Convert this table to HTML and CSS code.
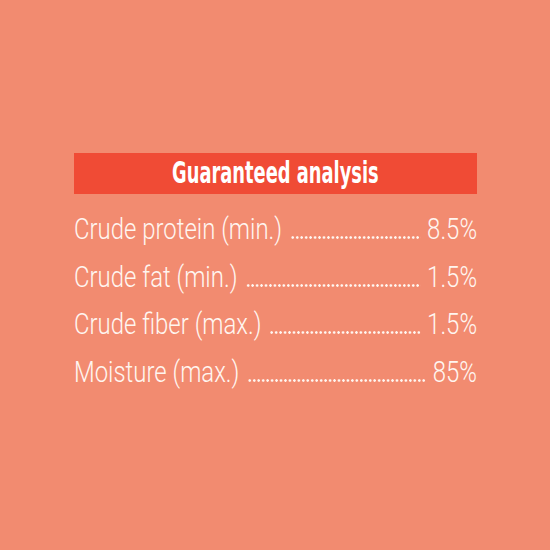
FILE: index.html
```
<!DOCTYPE html>
<html lang="en">
<head>
    <meta charset="UTF-8">
    <meta name="viewport" content="width=device-width, initial-scale=1.0">
    <title>Guaranteed analysis</title>
    <link rel="stylesheet" href="styles.css">
</head>
<body>

    <div class="analysis">
        <div class="analysis-title">
            <span>Guaranteed analysis</span>
        </div>

        <!-- lista condensada com scaleX -->
        <div class="rows">
            <div class="row">
                <span class="label">Crude protein (min.)</span>
                <span class="dots"></span>
                <span class="value">8.5%</span>
            </div>
            <div class="row">
                <span class="label">Crude fat (min.)</span>
                <span class="dots"></span>
                <span class="value">1.5%</span>
            </div>
            <div class="row">
                <span class="label">Crude fiber (max.)</span>
                <span class="dots"></span>
                <span class="value">1.5%</span>
            </div>
            <div class="row">
                <span class="label">Moisture (max.)</span>
                <span class="dots"></span>
                <span class="value">85%</span>
            </div>
        </div>
    </div>

</body>
</html>
```

FILE: styles.css
```
    body, html {
        margin: 0;
        padding: 0;
        height: 100%;
    }

    body {
        background-color: #F28B70;
        color: #FFF6F0;
        font-family: Roboto, "DejaVu Sans Condensed", sans-serif;
        display: flex;
        justify-content: center;
        align-items: flex-start;
    }

    .analysis {
        width: 403px;
        padding-top: 153px;
    }

    .analysis-title {
        background-color: #F04B35;
        height: 41px;
        display: flex;
        align-items: center;
        justify-content: center;
        margin-bottom: 12px;
    }

    .analysis-title span {
        display: inline-block;
        font-family: "DejaVu Sans Condensed", sans-serif;
        font-size: 31px;
        font-weight: bold;
        color: #FFFFFF;
        transform: scaleX(0.64);
        white-space: nowrap;
        margin-top: -4px;
    }

    .rows {
        width: 497px;
        transform: scaleX(0.811);
        transform-origin: left top;
    }

    .row {
        display: flex;
        align-items: baseline;
        font-size: 29.5px;
        font-weight: 300;
        line-height: 47.7px;
    }

    .dots {
        flex: 1;
        height: 3px;
        margin: 0 8px 0 10px;
        background-image: radial-gradient(circle, #FFF6F0 1.1px, transparent 1.7px);
        background-size: 5.5px 3px;
        background-repeat: repeat-x;
    }
```
